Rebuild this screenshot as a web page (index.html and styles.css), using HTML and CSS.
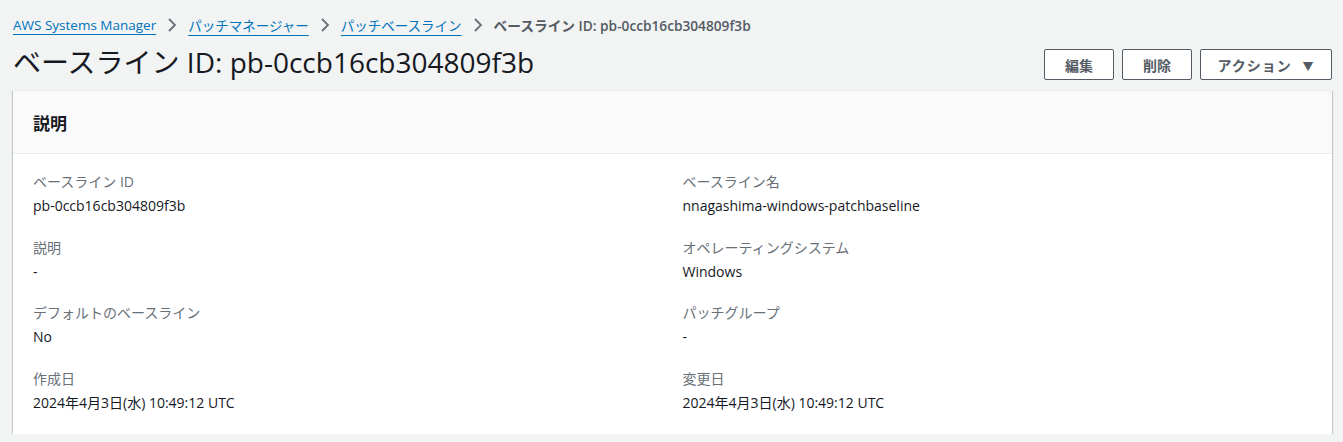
FILE: index.html
```html
<!DOCTYPE html>
<html lang="ja">
<head>
<meta charset="utf-8">
<link rel="stylesheet" href="styles.css">
</head>
<body>
<div class="page">
  <nav class="crumbs">
    <a class="crumb-link" href="#">AWS Systems Manager</a>
    <svg class="chev" width="16" height="16" viewBox="0 0 16 16"><path d="M5 2 L11 8 L5 14" fill="none" stroke="#687078" stroke-width="1.8"/></svg>
    <a class="crumb-link" href="#">パッチマネージャー</a>
    <svg class="chev" width="16" height="16" viewBox="0 0 16 16"><path d="M5 2 L11 8 L5 14" fill="none" stroke="#687078" stroke-width="1.8"/></svg>
    <a class="crumb-link" href="#">パッチベースライン</a>
    <svg class="chev" width="16" height="16" viewBox="0 0 16 16"><path d="M5 2 L11 8 L5 14" fill="none" stroke="#687078" stroke-width="1.8"/></svg>
    <span class="crumb-current">ベースライン ID: pb-0ccb16cb304809f3b</span>
  </nav>
  <header class="head">
    <h1 class="title">ベースライン ID: pb-0ccb16cb304809f3b</h1>
    <div class="actions">
      <button class="btn btn-edit">編集</button>
      <button class="btn btn-del">削除</button>
      <button class="btn btn-act">アクション <span class="caret">▼</span></button>
    </div>
  </header>
  <section class="card">
    <div class="card-head"><h2 class="card-title">説明</h2></div>
    <div class="card-body">
      <div class="col">
        <div class="field"><div class="label">ベースライン ID</div><div class="value">pb-0ccb16cb304809f3b</div></div>
        <div class="field"><div class="label">説明</div><div class="value">-</div></div>
        <div class="field"><div class="label">デフォルトのベースライン</div><div class="value">No</div></div>
        <div class="field"><div class="label">作成日</div><div class="value">2024年4月3日(水) 10:49:12 UTC</div></div>
      </div>
      <div class="col">
        <div class="field"><div class="label">ベースライン名</div><div class="value">nnagashima-windows-patchbaseline</div></div>
        <div class="field"><div class="label">オペレーティングシステム</div><div class="value">Windows</div></div>
        <div class="field"><div class="label">パッチグループ</div><div class="value">-</div></div>
        <div class="field"><div class="label">変更日</div><div class="value">2024年4月3日(水) 10:49:12 UTC</div></div>
      </div>
    </div>
  </section>
</div>
</body>
</html>
```

FILE: styles.css
```css
html, body {
  margin: 0;
  padding: 0;
  background: #f2f3f3;
  font-family: "Open Sans", "Noto Sans", "Noto Sans CJK JP", sans-serif;
  color: #16191f;
}
.page {
  padding: 13px 11px 0 13px;
}
.crumbs {
  display: flex;
  align-items: center;
  height: 24px;
  font-size: 13.5px;
  gap: 8px;
  white-space: nowrap;
}
.crumb-link {
  color: #0073bb;
  text-decoration: underline;
  text-underline-offset: 4px;
}
.chev { flex: none; }
.crumb-current {
  color: #545b64;
  font-weight: 600;
  font-size: 13.7px;
}
.head {
  display: flex;
  justify-content: space-between;
  align-items: flex-start;
  margin-top: 8px;
  height: 45px;
}
.title {
  margin: 0;
  font-size: 28px;
  line-height: 34px;
  font-weight: 400;
  white-space: nowrap;
}
.actions {
  display: flex;
  gap: 8px;
  margin-top: 4px;
}
.btn {
  height: 31px;
  border: 1px solid #545b64;
  border-radius: 2px;
  background: #fff;
  color: #545b64;
  font-family: inherit;
  font-size: 14px;
  font-weight: 700;
  padding: 0;
  white-space: nowrap;
}
.btn-edit, .btn-del { width: 70px; }
.btn-act { width: 132px; letter-spacing: 1px; }
.caret { font-size: 11px; margin-left: 6px; }
.card {
  background: #fff;
  border-top: 1px solid #eaeded;
  box-shadow: 0 1px 1px 0 rgba(0,28,36,.3), 1px 1px 1px 0 rgba(0,28,36,.15), -1px 1px 1px 0 rgba(0,28,36,.15);
}
.card-head {
  background: #fafafa;
  border-bottom: 1px solid #eaeded;
  height: 62px;
  display: flex;
  align-items: center;
  padding: 0 20px;
}
.card-title {
  margin: 0;
  font-size: 17px;
  font-weight: 700;
}
.card-body {
  display: grid;
  grid-template-columns: 1fr 1fr;
  padding: 16px 20px 18px 20px;
  column-gap: 20px;
}
.field {
  height: 65.5px;
}
.field:last-child { height: 49px; }
.label {
  color: #687078;
  font-size: 14px;
  line-height: 24px;
}
.value {
  font-size: 14px;
  line-height: 24px;
}
```
